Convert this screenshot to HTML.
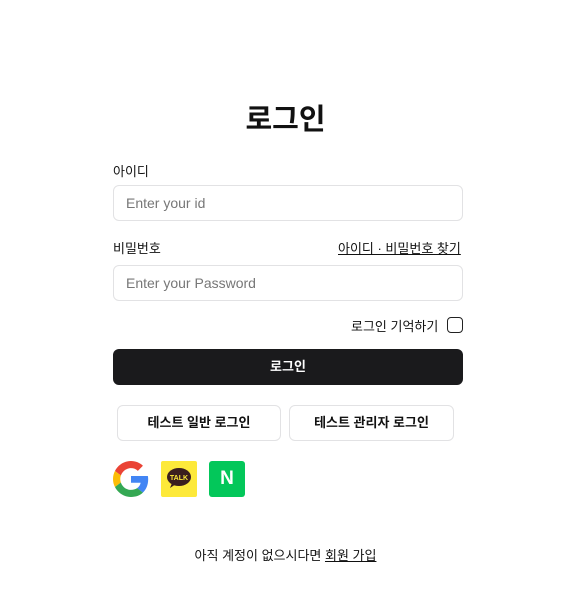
<!DOCTYPE html>
<html><head><meta charset="utf-8"><style>
body{margin:0;width:571px;height:614px;background:#fff;font-family:"Liberation Sans","Noto Sans CJK KR",sans-serif;color:#111;position:relative}
.a{position:absolute}
.in{position:absolute;left:113px;width:348px;height:34px;border:1px solid #e2e2e4;border-radius:6px;box-sizing:border-box;width:350px;height:36px;font-size:14px;color:#777;padding-left:12px;line-height:34px}
.lb{font-size:13px}
.btn{position:absolute;top:405px;height:36px;border:1px solid #e2e2e4;border-radius:6px;box-sizing:border-box;font-size:13px;font-weight:bold;text-align:center;line-height:34px}
</style></head><body>
<div class="a" style="left:0;width:571px;top:100px;text-align:center;font-size:29px;font-weight:bold;line-height:40px">로그인</div>
<div class="a lb" style="left:113px;top:161px">아이디</div>
<div class="in" style="top:185px">Enter your id</div>
<div class="a lb" style="left:113px;top:238px">비밀번호</div>
<div class="a lb" style="left:338px;top:238px;text-decoration:underline">아이디 · 비밀번호 찾기</div>
<div class="in" style="top:265px">Enter your Password</div>
<div class="a lb" style="left:351px;top:316px">로그인 기억하기</div>
<div class="a" style="left:447px;top:317px;width:14px;height:14px;border:1.5px solid #222;border-radius:4px"></div>
<div class="a" style="left:113px;top:349px;width:350px;height:36px;background:#1a1a1c;border-radius:6px;color:#fff;font-size:13px;font-weight:bold;text-align:center;line-height:36px">로그인</div>
<div class="btn" style="left:117px;width:164px">테스트 일반 로그인</div>
<div class="btn" style="left:289px;width:165px">테스트 관리자 로그인</div>
<svg class="a" style="left:113px;top:461px" width="36" height="36" viewBox="0 0 48 48">
<path fill="#EA4335" d="M24 9.5c3.5 0 6.6 1.2 9.1 3.6l6.8-6.8C35.8 2.4 30.3 0 24 0 14.6 0 6.6 5.4 2.6 13.3l7.9 6.1C12.4 13.7 17.7 9.5 24 9.5z"/>
<path fill="#4285F4" d="M46.9 24.5c0-1.6-.1-3.1-.4-4.5H24v9h12.9c-.6 3-2.3 5.5-4.8 7.2l7.7 6c4.5-4.2 7.1-10.3 7.1-17.7z"/>
<path fill="#FBBC05" d="M10.5 28.6c-.5-1.4-.8-3-.8-4.6s.3-3.2.8-4.6l-7.9-6.1C.9 16.5 0 20.1 0 24s.9 7.5 2.6 10.7l7.9-6.1z"/>
<path fill="#34A853" d="M24 48c6.5 0 11.9-2.1 15.9-5.8l-7.7-6c-2.2 1.5-5 2.3-8.2 2.3-6.3 0-11.6-4.2-13.5-9.9l-7.9 6.1C6.6 42.6 14.6 48 24 48z"/>
</svg>
<div class="a" style="left:161px;top:461px;width:36px;height:36px;background:#fde93a;border-radius:2px"></div>
<svg class="a" style="left:161px;top:461px" width="36" height="36"><ellipse cx="18" cy="16" rx="12" ry="9" fill="#3b1e1e"/><path d="M11 22l-2 5 6-4z" fill="#3b1e1e"/><text x="18" y="19" font-size="7" font-weight="bold" fill="#fde93a" text-anchor="middle" font-family="Liberation Sans">TALK</text></svg>
<div class="a" style="left:209px;top:461px;width:36px;height:36px;background:#03c75a;border-radius:3px;color:#fff;font-weight:bold;font-size:19px;text-align:center;line-height:36px">N</div>
<div class="a" style="left:0;width:571px;top:545px;text-align:center;font-size:13px">아직 계정이 없으시다면 <u>회원 가입</u></div>
</body></html>
